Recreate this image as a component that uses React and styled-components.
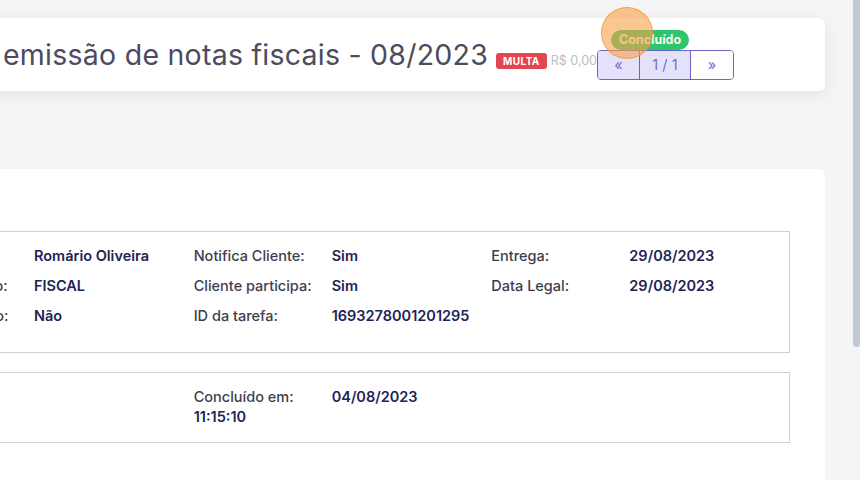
import React from 'react';
import styled, { createGlobalStyle } from 'styled-components';

const GlobalStyle = createGlobalStyle`
  html, body {
    margin: 0;
    padding: 0;
    overflow: hidden;
    background: #f5f5f5;
  }
  body {
    font-family: Inter, "Noto Sans", sans-serif;
  }
`;

const Shell = styled.div`
  margin-left: -155px;
  width: 980px;
  padding-top: 18px;
`;

const HeaderCard = styled.div`
  background: #fff;
  border-radius: 6px;
  box-shadow: 0 4px 18px rgba(0, 0, 0, 0.07);
  height: 73px;
  box-sizing: border-box;
  padding-left: 158px;
  display: flex;
  align-items: center;
`;

const Title = styled.h1`
  margin: 0;
  font-size: 28.5px;
  font-weight: 400;
  color: #4d4b60;
  letter-spacing: 0.25px;
  white-space: nowrap;
`;

const Extras = styled.div`
  display: flex;
  align-items: center;
  margin-top: 12px;
  margin-left: 8px;
`;

const FineBadge = styled.span`
  background: #e2474f;
  color: #fff;
  font-size: 10px;
  font-weight: 700;
  letter-spacing: 0.4px;
  padding: 2px 7px;
  border-radius: 3px;
  line-height: 12px;
`;

const Amount = styled.span`
  color: #bdbdc4;
  font-size: 12.5px;
  margin-left: 4px;
`;

const StatusBlock = styled.div`
  display: flex;
  flex-direction: column;
  align-items: flex-start;
  position: relative;
`;

const StatusBadge = styled.span`
  margin-left: 14px;
  background: #2ec56d;
  color: #f4fbf1;
  font-size: 12.5px;
  font-weight: 700;
  height: 20px;
  line-height: 20px;
  padding: 0 8px;
  border-radius: 10px;
`;

const Pager = styled.div`
  display: flex;
  border: 1px solid #6d62c6;
  border-radius: 4px;
  overflow: hidden;
  height: 30px;
  box-sizing: border-box;
`;

const PageCell = styled.span`
  width: ${(props) => props.w}px;
  display: flex;
  align-items: center;
  justify-content: center;
  background: ${(props) => (props.active ? '#e4e2fb' : '#fff')};
  color: #7469d4;
  font-size: 14.5px;
  & + & {
    border-left: 1px solid #6d62c6;
  }
`;

const Cursor = styled.span`
  position: absolute;
  left: 4px;
  top: -23px;
  width: 52px;
  height: 52px;
  border-radius: 50%;
  background: rgba(250, 160, 70, 0.6);
  border: 1.5px solid rgba(240, 150, 60, 0.75);
  box-sizing: border-box;
`;

const MainCard = styled.div`
  margin-top: 78px;
  background: #fff;
  border-radius: 6px;
  padding: 62px 35px 40px;
  height: 400px;
  box-sizing: border-box;
`;

const InfoBox = styled.div`
  border: 1px solid #cfcfd4;
  padding: ${(props) => props.pad};
  display: grid;
  grid-template-columns: repeat(3, 1fr);
  margin-bottom: 19px;
`;

const Field = styled.div`
  display: flex;
  height: 30px;
  align-items: center;
  font-size: 14.5px;
`;

const Label = styled.span`
  width: 138px;
  flex-shrink: 0;
  color: #3d3d4d;
  font-weight: 500;
  white-space: nowrap;
`;

const Value = styled.span`
  color: #1e2456;
  font-weight: 600;
`;

const InlineField = styled.div`
  font-size: 14.5px;
  line-height: 20px;
  max-width: 250px;
`;

const InlineLabel = styled.span`
  display: inline-block;
  width: 138px;
  color: #3d3d4d;
  font-weight: 500;
`;

const Scrollbar = styled.div`
  position: fixed;
  top: 0;
  right: 0;
  width: 7px;
  height: 347px;
  background: #c2c9d6;
  border-radius: 0 0 4px 4px;
`;

const fields = [
  ['Responsável:', 'Romário Oliveira', 'Notifica Cliente:', 'Sim', 'Entrega:', '29/08/2023'],
  ['Tipo de serviço:', 'FISCAL', 'Cliente participa:', 'Sim', 'Data Legal:', '29/08/2023'],
  ['Teve retrabalho:', 'Não', 'ID da tarefa:', '1693278001201295', '', ''],
];

export default function App() {
  return (
    <>
      <GlobalStyle />
      <Shell>
        <HeaderCard>
          <Title>emissão de notas fiscais - 08/2023</Title>
          <Extras>
            <FineBadge>MULTA</FineBadge>
            <Amount>R$ 0,00</Amount>
          </Extras>
          <StatusBlock>
            <StatusBadge>Concluído</StatusBadge>
            <Pager>
              <PageCell w={41} active>«</PageCell>
              <PageCell w={50} active>1 / 1</PageCell>
              <PageCell w={42}>»</PageCell>
            </Pager>
            <Cursor />
          </StatusBlock>
        </HeaderCard>
        <MainCard>
          <InfoBox pad="8px 0 22px 15px">
            {fields.map((row) =>
              [0, 2, 4].map((i) => (
                <Field key={row[i] + row[i + 1] + i}>
                  <Label>{row[i]}</Label>
                  <Value>{row[i + 1]}</Value>
                </Field>
              ))
            )}
          </InfoBox>
          <InfoBox pad="14px 0 15px 15px">
            <div />
            <InlineField>
              <InlineLabel>Concluído em:</InlineLabel>
              <Value>04/08/2023 11:15:10</Value>
            </InlineField>
            <div />
          </InfoBox>
        </MainCard>
      </Shell>
      <Scrollbar />
    </>
  );
}
